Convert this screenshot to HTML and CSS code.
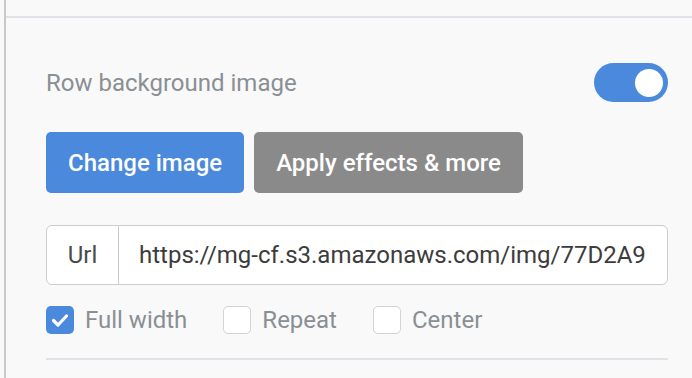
FILE: index.html
```html
<!doctype html>
<html lang="en">
  <head>
    <meta charset="UTF-8" />
    <meta name="viewport" content="width=device-width, initial-scale=1.0" />
    <title>Row settings</title>
    <link rel="stylesheet" href="styles.css">
  </head>
  <body>
    <div class="panel">
      <div class="prev-section"></div>

      <div class="section">
        <div class="row-head">
          <span class="label">Row background image</span>
          <span class="toggle on"><span class="knob"></span></span>
        </div>

        <div class="actions">
          <button class="btn btn-primary">Change image</button>
          <button class="btn btn-muted">Apply effects &amp; more</button>
        </div>

        <div class="input-group">
          <span class="addon">Url</span>
          <span class="url">https://mg-cf.s3.amazonaws.com/img/77D2A9</span>
        </div>

        <div class="options">
          <label class="check">
            <span class="box checked">
              <svg viewBox="0 0 28 28" width="28" height="28">
                <path d="M7.5 14.5l4.5 4.5 8.5-9" fill="none" stroke="#fff" stroke-width="3.2" stroke-linecap="round" stroke-linejoin="round" />
              </svg>
            </span>
            Full width
          </label>
          <label class="check">
            <span class="box"></span>
            Repeat
          </label>
          <label class="check">
            <span class="box"></span>
            Center
          </label>
        </div>

        <div class="divider"></div>
      </div>
    </div>
  </body>
</html>
```

FILE: styles.css
```css
* {
  margin: 0;
  padding: 0;
  box-sizing: border-box;
}

body {
  font-family: Roboto, "Liberation Sans", sans-serif;
  background: #f9f9f9;
  overflow: hidden;
}

.panel {
  margin-left: 4px;
  border-left: 2px solid #c9c9c9;
  min-height: 100vh;
}

.prev-section {
  height: 18px;
  border-bottom: 2px solid #dfe3e7;
}

.section {
  padding: 45px 24px 0 40px;
}

.row-head {
  display: flex;
  align-items: center;
  justify-content: space-between;
}

.label {
  font-size: 24px;
  color: #8a8f94;
}

.toggle {
  width: 74px;
  height: 39px;
  border-radius: 20px;
  background: #4a89dc;
  display: flex;
  align-items: center;
  justify-content: flex-end;
  padding-right: 5px;
}

.knob {
  width: 28px;
  height: 28px;
  border-radius: 50%;
  background: #fff;
}

.actions {
  display: flex;
  gap: 10px;
  margin-top: 30px;
}

.btn {
  height: 61px;
  border: none;
  border-radius: 5px;
  color: #fff;
  font-family: Roboto, "Liberation Sans", sans-serif;
  font-size: 24px;
  font-weight: 500;
  padding: 0 22px;
}

.btn-primary {
  background: #4a89dc;
}

.btn-muted {
  background: #8a8a8a;
}

.input-group {
  display: flex;
  height: 60px;
  margin-top: 32px;
  border: 1.5px solid #cccccc;
  border-radius: 6px;
  background: #fff;
  font-size: 24px;
  color: #3c3c3c;
  overflow: hidden;
}

.addon {
  width: 72px;
  display: flex;
  align-items: center;
  justify-content: center;
  border-right: 1.5px solid #cccccc;
  color: #4a4a4a;
}

.url {
  display: flex;
  align-items: center;
  padding-left: 20px;
  white-space: nowrap;
}

.options {
  display: flex;
  gap: 36px;
  margin-top: 21px;
}

.check {
  display: flex;
  align-items: center;
  gap: 11px;
  font-size: 24px;
  color: #8a8f94;
}

.box {
  width: 28px;
  height: 28px;
  border-radius: 5px;
  border: 1.5px solid #d4d4d4;
  background: #fff;
  display: flex;
}

.box.checked {
  background: #4a89dc;
  border: none;
}

.divider {
  height: 2px;
  background: #dfe3e7;
  margin-top: 24px;
}
```
